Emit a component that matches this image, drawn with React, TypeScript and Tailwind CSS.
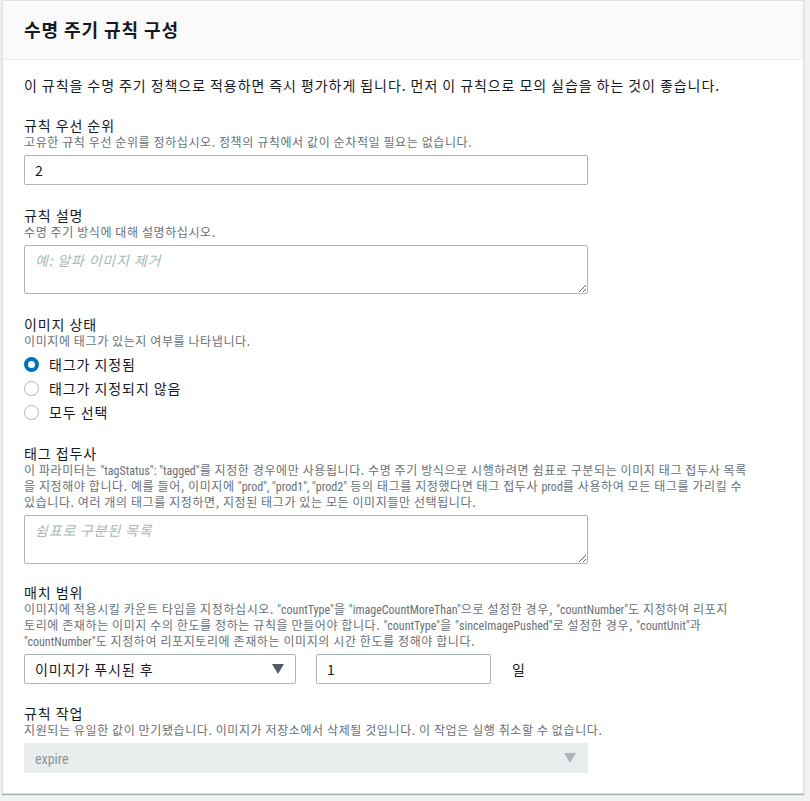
import React from "react";

const font = { fontFamily: '"Noto Sans CJK KR", "Noto Sans", Roboto, sans-serif', letterSpacing: "0.058em" };
const taFont = { fontFamily: '"Noto Sans CJK KR", "Noto Sans", Roboto, sans-serif', letterSpacing: "0.058em" };

function E({ children }: { children: React.ReactNode }) {
  return (
    <span style={{ fontFamily: '"Liberation Sans Narrow", "Roboto Condensed", Roboto, sans-serif', letterSpacing: "0" }}>
      {children}
    </span>
  );
}

function Label({ children }: { children: React.ReactNode }) {
  return <div className="text-[14px] leading-[18px] text-[#16191f]">{children}</div>;
}
function Desc({ children }: { children: React.ReactNode }) {
  return (
    <div className="text-[12px] leading-[16px] text-[#687078]" style={{ letterSpacing: "0.05em" }}>
      {children}
    </div>
  );
}
function Line({ children }: { children: React.ReactNode }) {
  return <div className="whitespace-nowrap h-[16px] leading-[16px]">{children}</div>;
}

function Radio({ checked, label }: { checked?: boolean; label: string }) {
  return (
    <div className="flex items-center h-[24px]">
      {checked ? (
        <span className="w-[15px] h-[15px] rounded-full border-[4px] border-[#0073bb] bg-white box-border" />
      ) : (
        <span className="w-[15px] h-[15px] rounded-full border border-[#aab7b8] bg-white box-border" />
      )}
      <span className="ml-[10px] text-[14px] text-[#16191f]">{label}</span>
    </div>
  );
}

function Tri({ color }: { color: string }) {
  return (
    <svg width="12" height="10" viewBox="0 0 12 10">
      <polygon points="0,0 12,0 6,10" fill={color} />
    </svg>
  );
}

export default function App() {
  return (
    <div className="min-h-[801px] w-[810px] bg-[#f2f3f3]" style={font}>
      <div className="ml-[2px] w-[802px] bg-white border border-[#dfe3e3] shadow-[0_1px_1px_0_rgba(0,28,36,0.3)]">
        <div className="h-[59px] bg-[#fafafa] border-b border-[#eaeded] flex items-center px-[21px]">
          <div className="text-[18px] font-bold text-[#16191f] leading-[24px] -mt-[2px]">수명 주기 규칙 구성</div>
        </div>
        <div className="px-[21px] pt-[15px] pb-[20px]">
          <div className="text-[14px] leading-[20px] text-[#16191f]">
            이 규칙을 수명 주기 정책으로 적용하면 즉시 평가하게 됩니다. 먼저 이 규칙으로 모의 실습을 하는 것이 좋습니다.
          </div>

          <div className="mt-[21px]">
            <Label>규칙 우선 순위</Label>
            <Desc>
              <Line>고유한 규칙 우선 순위를 정하십시오. 정책의 규칙에서 값이 순차적일 필요는 없습니다.</Line>
            </Desc>
            <div className="mt-[5px] w-[564px] h-[30px] border border-[#aab7b8] rounded-[2px] flex items-center px-[10px] text-[14px] text-[#16191f]">
              2
            </div>
          </div>

          <div className="mt-[21px]">
            <Label>규칙 설명</Label>
            <Desc>
              <Line>수명 주기 방식에 대해 설명하십시오.</Line>
            </Desc>
            <textarea
              className="mt-[5px] block w-[564px] h-[49px] border border-[#aab7b8] rounded-[2px] px-[10px] py-[4px] text-[14px] leading-[20px] text-[#16191f] placeholder:italic placeholder:text-[#aab7b8] outline-none"
              placeholder="예: 알파 이미지 제거"
              style={taFont}
            />
          </div>

          <div className="mt-[21px]">
            <Label>이미지 상태</Label>
            <Desc>
              <Line>이미지에 태그가 있는지 여부를 나타냅니다.</Line>
            </Desc>
            <div className="mt-[3px]">
              <Radio checked label="태그가 지정됨" />
              <Radio label="태그가 지정되지 않음" />
              <Radio label="모두 선택" />
            </div>
          </div>

          <div className="mt-[20px]">
            <Label>태그 접두사</Label>
            <Desc>
              <Line>
                이 파라미터는 <E>"tagStatus": "tagged"</E>를 지정한 경우에만 사용됩니다. 수명 주기 방식으로 시행하려면 쉼표로 구분되는 이미지 태그 접두사 목록
              </Line>
              <Line>
                을 지정해야 합니다. 예를 들어, 이미지에 <E>"prod", "prod1", "prod2"</E> 등의 태그를 지정했다면 태그 접두사 <E>prod</E>를 사용하여 모든 태그를 가리킬 수
              </Line>
              <Line>있습니다. 여러 개의 태그를 지정하면, 지정된 태그가 있는 모든 이미지들만 선택됩니다.</Line>
            </Desc>
            <textarea
              className="mt-[5px] block w-[564px] h-[49px] border border-[#aab7b8] rounded-[2px] px-[10px] py-[4px] text-[14px] leading-[20px] text-[#16191f] placeholder:italic placeholder:text-[#aab7b8] outline-none"
              placeholder="쉼표로 구분된 목록"
              style={taFont}
            />
          </div>

          <div className="mt-[19px]">
            <Label>매치 범위</Label>
            <Desc>
              <Line>
                이미지에 적용시킬 카운트 타입을 지정하십시오. <E>"countType"</E>을 <E>"imageCountMoreThan"</E>으로 설정한 경우, <E>"countNumber"</E>도 지정하여 리포지
              </Line>
              <Line>
                토리에 존재하는 이미지 수의 한도를 정하는 규칙을 만들어야 합니다. <E>"countType"</E>을 <E>"sinceImagePushed"</E>로 설정한 경우, <E>"countUnit"</E>과
              </Line>
              <Line>
                <E>"countNumber"</E>도 지정하여 리포지토리에 존재하는 이미지의 시간 한도를 정해야 합니다.
              </Line>
            </Desc>
            <div className="mt-[5px] flex items-center">
              <div className="w-[272px] h-[30px] border border-[#aab7b8] rounded-[2px] flex items-center justify-between pl-[10px] pr-[11px] text-[14px] text-[#16191f]">
                <span>이미지가 푸시된 후</span>
                <Tri color="#545b64" />
              </div>
              <div className="ml-[20px] w-[175px] h-[30px] border border-[#aab7b8] rounded-[2px] flex items-center px-[10px] text-[14px] text-[#16191f]">
                1
              </div>
              <span className="ml-[21px] text-[14px] text-[#16191f]">일</span>
            </div>
          </div>

          <div className="mt-[20px]">
            <Label>규칙 작업</Label>
            <Desc>
              <Line>지원되는 유일한 값이 만기됐습니다. 이미지가 저장소에서 삭제될 것입니다. 이 작업은 실행 취소할 수 없습니다.</Line>
            </Desc>
            <div className="mt-[5px] w-[564px] h-[30px] bg-[#eaeded] rounded-[2px] flex items-center justify-between pl-[11px] pr-[12px] text-[14px] text-[#879596]">
              <span className="leading-[20px]">
                <E>expire</E>
              </span>
              <Tri color="#aab7b8" />
            </div>
          </div>
        </div>
      </div>
    </div>
  );
}
